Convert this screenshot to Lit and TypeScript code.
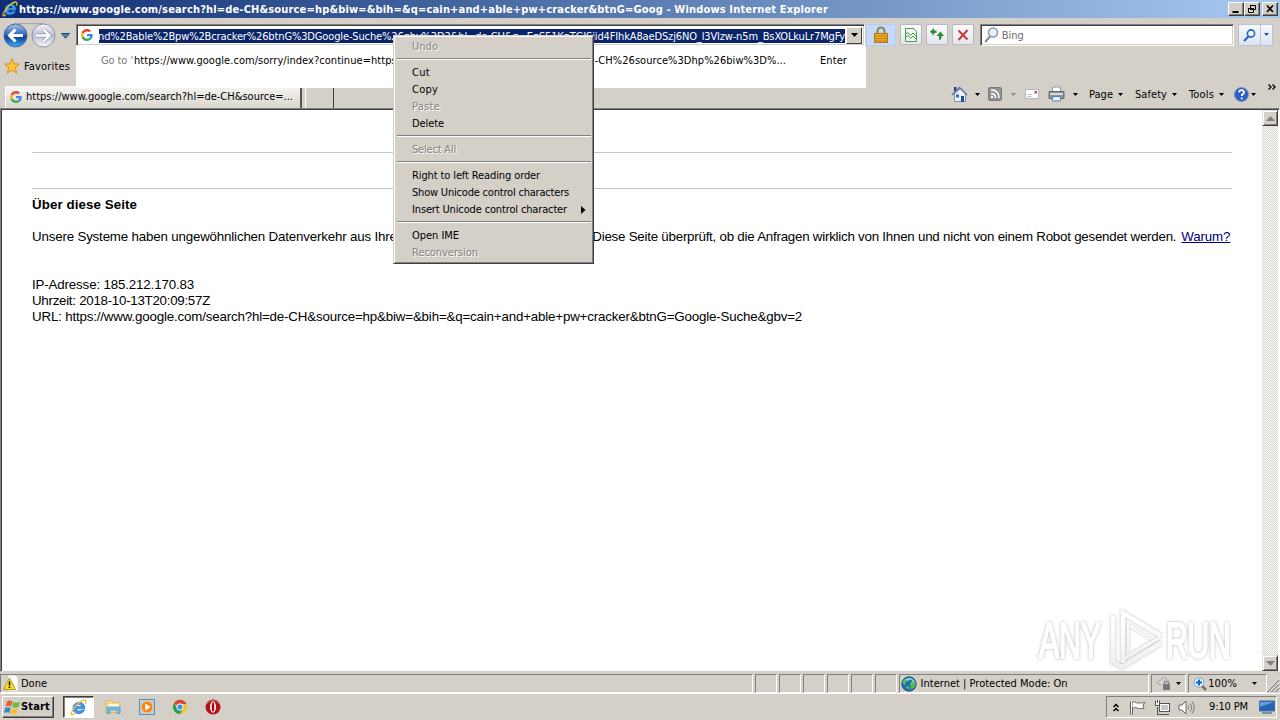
import { LitElement, css, html, svg } from "lit";
import { customElement, property } from "lit/decorators.js";
import { classMap } from "lit/directives/class-map.js";

// inline text whose tracking is tuned to the pixel width of the original UI font
@customElement("fit-text")
export class FitText extends LitElement {
    @property({ type: Number }) w = 0;

    static styles = css`
        :host {
            display: inline-block;
            white-space: pre;
            flex: none;
        }
    `
    firstUpdated() {
        const length = (this.textContent ?? "").trim().length;
        const natural = this.getBoundingClientRect().width;
        if (this.w && length) {
            this.style.letterSpacing = `${(this.w - natural) / length}px`;
        }
    }
    render() {
        return html`<slot></slot>`
    }
}

const googleIcon = html`
    <svg width="12" height="12" viewBox="0 0 48 48">
        <path fill="#ea4335" d="M24 9.500c3.500 0 6.700 1.200 9.200 3.600l6.900-6.900C35.900 2.400 30.500 0 24 0 14.600 0 6.500 5.400 2.600 13.200l8 6.200C12.400 13.700 17.700 9.500 24 9.500z"/>
        <path fill="#4285f4" d="M47 24.500c0-1.600-.2-3.100-.4-4.500H24v9h12.900c-.6 3-2.200 5.500-4.700 7.200l7.700 6C44.400 38 47 31.800 47 24.500z"/>
        <path fill="#fbbc05" d="M10.500 28.600c-.5-1.500-.8-3-.8-4.600s.3-3.100.8-4.600l-8-6.200C.9 16.500 0 20.100 0 24s.9 7.500 2.600 10.800z"/>
        <path fill="#34a853" d="M24 48c6.500 0 11.900-2.100 15.900-5.800l-7.700-6c-2.200 1.500-4.900 2.300-8.200 2.300-6.300 0-11.600-4.200-13.500-9.900l-8 6.200C6.500 42.600 14.600 48 24 48z"/>
    </svg>`

const ieIcon = (size: number) => html`
    <svg width=${size} height=${size} viewBox="0 0 16 16">
        <path fill-rule="evenodd" d="M14 9.200H6.200c.3 2.500 3.400 2.700 4.500 1.100h3C11.500 15.600 2.600 14.800 2.800 8.500 3 1.500 14.300.8 14 9.200zM6.200 7h4.500C10.300 4.400 6.600 4.400 6.200 7z" fill="#3c9cf0" stroke="#1560b0" stroke-width=".5"/>
        <path d="M4.200 13.400c-2.400 2.400-4 1.700-2.600-1.200C3.400 8 9.400 1.600 13.200 1c2-.2 2 1.800 1 3.600" fill="none" stroke="#f0c02c" stroke-width="1.300"/>
    </svg>`

const caret = (cls = "") => html`
    <svg class="caret ${cls}" width="5" height="3" viewBox="0 0 5 3"><path d="M0 0h5L2.500 3z" fill="currentColor"/></svg>`

const scrollArrow = (d: string) => html`
    <svg width="9" height="5" viewBox="0 0 9 5"><path d=${d} fill="#808080"/></svg>`

@customElement("context-menu")
export class ContextMenu extends LitElement {
    items = [
        { label: "Undo", w: 26, off: true },
        null,
        { label: "Cut", w: 18 },
        { label: "Copy", w: 26 },
        { label: "Paste", w: 28, off: true },
        { label: "Delete", w: 32 },
        null,
        { label: "Select All", w: 44, off: true },
        null,
        { label: "Right to left Reading order", w: 128 },
        { label: "Show Unicode control characters", w: 157 },
        { label: "Insert Unicode control character", w: 155, sub: true },
        null,
        { label: "Open IME", w: 47 },
        { label: "Reconversion", w: 66, off: true },
    ]

    static styles = css`
        :host {
            box-sizing: border-box;
            display: block;
            padding: 2px 1px 1px;
            background: #d4d0c8;
            border: 1px solid;
            border-color: #d4d0c8 #404040 #404040 #d4d0c8;
            box-shadow: inset 1px 1px #fff, inset -1px -1px #808080;
        }
        .item {
            height: 17px;
            padding: 0 6px 0 17px;
            display: flex;
            align-items: center;
            justify-content: space-between;
            line-height: 15px;
        }
        .off {
            color: #858279;
            text-shadow: 1px 1px #fff;
        }
        .sep {
            height: 1px;
            margin: 3px 1px 4px 2px;
            background: #808080;
            border-bottom: 1px solid #fff;
        }
    `
    render() {
        return this.items.map(item => item
            ? html`
                <div class=${classMap({ item: true, off: !!item.off })}>
                    <fit-text w=${item.w}>${item.label}</fit-text>
                    ${item.sub ? html`<svg width="5" height="8" viewBox="0 0 5 8"><path d="M0 0v8l4.500-4z"/></svg>` : ""}
                </div>`
            : html`<div class="sep"></div>`)
    }
}

@customElement("browser-toolbar")
export class BrowserToolbar extends LitElement {
    static styles = css`
        :host {
            height: 36px;
            display: flex;
            box-sizing: border-box;
            padding: 5px 7px 0 3px;
            align-items: flex-start;
        }
        svg {
            display: block;
            flex: none;
        }
        .hist {
            margin: 10px 6px 0 4px;
        }
        .field {
            box-sizing: border-box;
            height: 22px;
            margin-top: 1px;
            background: #fff;
            display: flex;
            align-items: center;
            border: 1px solid;
            border-color: #808080 #fff #fff #808080;
            box-shadow: inset 1px 1px #404040, inset -1px -1px #d4d0c8;
        }
        .address {
            width: 789px;
            padding: 0 2px 0 4px;
            gap: 6px;
        }
        .url {
            width: 747px;
            height: 14px;
            margin-top: 1px;
            line-height: 15px;
            overflow: hidden;
            background: #0a246a;
            color: #fff;
        }
        .url fit-text {
            margin-left: -1px;
        }
        .drop {
            box-sizing: border-box;
            width: 16px;
            height: 17px;
            margin-left: -5px;
            background: #d4d0c8;
            border: 1px solid;
            border-color: #fff #404040 #404040 #fff;
            display: flex;
            align-items: center;
            justify-content: center;
        }
        .lock {
            width: 30px;
            height: 22px;
            margin: 1px 4px 0 1px;
            background: #c5dcf8;
            display: flex;
            justify-content: center;
            align-items: center;
            box-shadow: inset 0 0 0 1px #b4cdf3;
        }
        .btn {
            box-sizing: border-box;
            width: 22px;
            height: 21px;
            margin: 1px 4px 0 0;
            border: 1px solid #b3bac6;
            border-radius: 2px;
            background: linear-gradient(#fafbfd, #e2e6ee);
            display: flex;
            justify-content: center;
            align-items: center;
        }
        .search {
            width: 255px;
            margin-left: 2px;
            padding-left: 3px;
            gap: 3px;
            color: #6d6d6d;
        }
        .search fit-text {
            margin-top: 2px;
        }
        .go {
            margin: 1px 0 0 4px;
            box-sizing: border-box;
            height: 22px;
            width: 35px;
            display: flex;
            align-items: center;
            border: 1px solid #b9c4d6;
            background: linear-gradient(#f6f8fc, #dde5f2);
            color: #1a56b8;
        }
        .go > svg:first-child {
            margin: 0 4px;
        }
        .go > span {
            height: 20px;
            border-left: 1px solid #b9c4d6;
            padding: 8px 0 0 3px;
            box-sizing: border-box;
        }
    `
    render() {
        return html`
            <svg width="54" height="26" viewBox="0 0 54 26">
                <defs>
                    <linearGradient id="b" x2="0" y2="1">
                        <stop offset="0" stop-color="#a8c4ec"/><stop offset=".45" stop-color="#3168bf"/>
                        <stop offset=".55" stop-color="#0b3c9c"/><stop offset="1" stop-color="#3fb2f4"/>
                    </linearGradient>
                    <linearGradient id="f" x2="0" y2="1">
                        <stop offset="0" stop-color="#f4f6fb"/><stop offset=".5" stop-color="#b9bfd0"/><stop offset="1" stop-color="#f6f9fd"/>
                    </linearGradient>
                </defs>
                <path d="M12 .5h29" stroke="#aaa8ae" stroke-width="1.500"/>
                <circle cx="12.500" cy="12.500" r="11.500" fill="url(#b)" stroke="#4e6696"/>
                <circle cx="40.500" cy="12.500" r="11.500" fill="url(#f)" stroke="#8c93a6"/>
                <path d="M20 12.500H7M12.500 6.500l-6 6 6 6" fill="none" stroke="#fff" stroke-width="3"/>
                <path d="M33 12.500h13M40.500 6.500l6 6-6 6" fill="none" stroke="#8e95a8" stroke-width="4"/>
                <path d="M33 12.500h13M40.500 6.500l6 6-6 6" fill="none" stroke="#fff" stroke-width="2.500"/>
            </svg>
            <svg class="hist" width="9" height="6" viewBox="0 0 9 6"><path d="M.5.500h8L4.500 5.200z" fill="#4a86ae" stroke="#1d4c72"/></svg>
            <div class="field address">
                ${googleIcon}
                <div class="url"><fit-text w="747">nd%2Bable%2Bpw%2Bcracker%26btnG%3DGoogle-Suche%26gbv%3D2&amp;hl=de-CH&amp;q=EgS51KpTGJSiid4FIhkA8aeDSzj6NO_l3Vlzw-n5m_BsXOLkuLr7MgFy</fit-text></div>
                <div class="drop"><svg width="7" height="4" viewBox="0 0 7 4"><path d="M0 0h7L3.500 4z"/></svg></div>
            </div>
            <div class="lock">
                <svg width="16" height="18" viewBox="0 0 16 18">
                    <path d="M4.500 9V5a3.500 3.500 0 0 1 7 0v4" fill="none" stroke="#8d8050" stroke-width="2"/>
                    <rect x="1.500" y="7.500" width="13" height="9" fill="#eda927" stroke="#b07818"/>
                    <path d="M2 10h12M2 12.500h12M2 15h12" stroke="#c78212"/>
                </svg>
            </div>
            <div class="btn">
                <svg width="12" height="14" viewBox="0 0 12 14">
                    <path d="M.5.500h8l3 3v10H.5z" fill="#f3fbf3" stroke="#4b9c50"/>
                    <path d="M1 6l2-1.500 2.500 3L8 5l3 3M1 9l2-1.500 2.500 3L8 8l3 3" fill="none" stroke="#3f9545"/>
                </svg>
            </div>
            <div class="btn">
                <svg width="14" height="13" viewBox="0 0 14 13">
                    <path d="M4 0v2.500H6.500V5H4v2.500L0 3.800z" fill="#2f8a36"/>
                    <path d="M9 12V8H6.500l4-4.500 3.500 4.500h-2.500c0 3-.8 4-2.500 4z" fill="#2f8a36"/>
                </svg>
            </div>
            <div class="btn">
                <svg width="12" height="12" viewBox="0 0 12 12"><path d="M1.500 1.500l9 9M10.500 1l-9 10" stroke="#cf3a38" stroke-width="2"/></svg>
            </div>
            <div class="field search">
                <svg width="15" height="16" viewBox="0 0 15 16">
                    <circle cx="9" cy="5.500" r="4.500" fill="#e6f1fa" stroke="#8c9aac" stroke-width="1.500"/>
                    <path d="M6 9.500L1.200 15" stroke="#7e8998" stroke-width="2"/>
                </svg>
                <fit-text w="22">Bing</fit-text>
            </div>
            <div class="go">
                <svg width="13" height="13" viewBox="0 0 13 13">
                    <circle cx="8" cy="4.500" r="3.600" fill="#eaf4fd" stroke="#2265c8" stroke-width="1.600"/>
                    <path d="M5.500 7.500L1 12" stroke="#2265c8" stroke-width="2.200"/>
                </svg>
                <span>${caret()}</span>
            </div>
        `
    }
}

@customElement("command-bar")
export class CommandBar extends LitElement {
    static styles = css`
        :host {
            display: flex;
            align-items: center;
            height: 20px;
        }
        svg {
            display: block;
            flex: none;
        }
        .caret {
            margin: 0 0 0 5px;
        }
        .dim {
            color: #8d8a84;
        }
        .home {
            margin-right: 2px;
        }
        .feed {
            margin-left: 8px;
        }
        .feed + .caret {
            margin-left: 9px;
        }
        .mail {
            margin: 0 9px;
        }
        .print + .caret {
            margin: 0 11px 0 8px;
        }
        .menu {
            display: flex;
            align-items: center;
            margin-right: 12px;
        }
        .menu fit-text {
            margin-top: 1px;
        }
        .help {
            margin-left: -2px;
        }
        .help + .caret {
            margin-left: 2px;
        }
        .more {
            align-self: flex-start;
            margin: 0 0 0 12px;
        }
    `
    render() {
        return html`
            <svg class="home" width="17" height="17" viewBox="0 0 17 17">
                <path d="M3.500 7.500v8h11v-8l-5-5z" fill="#eef1f8" stroke="#7b8db5"/>
                <path d="M3 1h2.500v3L3 6z" fill="#24427e"/>
                <path d="M1 9l7.500-7.500L16 9" fill="none" stroke="#5474ad" stroke-width="1.500"/>
                <path d="M10 10h3v6h-3z" fill="#2a4c96"/><path d="M5 8.500h3v3H5z" fill="#3869b5"/>
            </svg>
            ${caret()}
            <svg class="feed" width="14" height="14" viewBox="0 0 14 14">
                <rect x=".5" y=".5" width="13" height="13" rx="1.500" fill="#929292" stroke="#787878"/>
                <path d="M3 3c5 0 8 3 8 8M3 6.500c3 0 4.500 1.500 4.500 4.500" fill="none" stroke="#fff" stroke-width="1.500"/>
                <circle cx="4" cy="10" r="1.200" fill="#fff"/>
            </svg>
            ${caret("dim")}
            <svg class="mail" width="14" height="10" viewBox="0 0 14 10">
                <rect x=".5" y=".5" width="13" height="9" fill="#fdfdfe" stroke="#b7b6ba"/>
                <path d="M2.500 5.500h5M2.500 7.500h4" stroke="#bcbcc2"/><path d="M9.500 2h2.500v2.500H9.500z" fill="#cc4d57"/>
            </svg>
            <svg class="print" width="17" height="16" viewBox="0 0 17 16">
                <path d="M4.500 6V1h8v5" fill="#fff" stroke="#8c96aa"/>
                <path d="M1 5.500h15v7H1z" fill="#8e929a" stroke="#656a73"/>
                <path d="M2 8h13" stroke="#d6d8dd" stroke-width="2"/>
                <path d="M4.500 10.500h8V15h-8z" fill="#e5eefa" stroke="#5b82b5"/>
            </svg>
            ${caret()}
            <div class="menu"><fit-text w="24">Page</fit-text>${caret()}</div>
            <div class="menu"><fit-text w="32">Safety</fit-text>${caret()}</div>
            <div class="menu"><fit-text w="25">Tools</fit-text>${caret()}</div>
            <svg class="help" width="15" height="15" viewBox="0 0 15 15">
                <circle cx="7.500" cy="7.500" r="7" fill="#2f5fc4" stroke="#7d91bb"/>
                <path d="M5 5.500c.3-3.300 5.300-2.900 5 0-.1 1.500-2.300 1.600-2.300 3.500M7.700 10.500v1.800" fill="none" stroke="#fff" stroke-width="1.800"/>
            </svg>
            ${caret()}
            <svg class="more" width="8" height="6" viewBox="0 0 8 6"><path d="M.5.500L3 3 .5 5.500M4.500.500L7 3 4.500 5.500" fill="none" stroke="#000" stroke-width="1.400"/></svg>
        `
    }
}

@customElement("web-page")
export class WebPage extends LitElement {
    static styles = css`
        :host {
            flex: 1;
            display: flex;
            background: #fff;
            border: 1px solid;
            border-color: #808080 #fff #d4d0c8 #808080;
            box-shadow: inset 1px 1px #404040;
            padding: 1px 1px 0 1px;
            position: relative;
        }
        main {
            flex: 1;
            padding: 42px 30px 0;
            font: 13.330px/16px "Liberation Sans", Arial, sans-serif;
            min-width: 0;
        }
        hr {
            border: 0;
            height: 1px;
            margin: 0 0 35px;
            background: #c6c6c6;
        }
        hr + hr {
            margin-bottom: 8px;
        }
        p {
            margin: 0 0 16px;
            white-space: nowrap;
        }
        .title {
            font-weight: bold;
        }
        .reason {
            display: flex;
            margin-bottom: 32px;
        }
        a {
            margin-left: 5px;
            color: #000080;
        }
        a fit-text {
            text-decoration: underline;
        }
        .scroll {
            width: 16px;
            display: flex;
            flex-direction: column;
            justify-content: space-between;
            background: repeating-conic-gradient(#fff 0 25%, #d4d0c8 0 50%) 0 0 / 2px 2px;
        }
        .scroll div {
            box-sizing: border-box;
            height: 16px;
            background: #d4d0c8;
            border: 1px solid;
            border-color: #e6e3dd #404040 #404040 #e6e3dd;
            box-shadow: inset 1px 1px #fff, inset -1px -1px #808080;
            display: flex;
            align-items: center;
            justify-content: center;
        }
        .mark {
            position: absolute;
            right: 44px;
            bottom: 0;
            filter: drop-shadow(0 0 1.500px rgba(0, 0, 0, 0.28));
        }
        .mark text {
            font: 50px "Liberation Sans", Arial, sans-serif;
            stroke: url(#m);
            stroke-width: 2;
        }
    `
    render() {
        return html`
            <main>
                <hr>
                <hr>
                <p class="title"><fit-text w="105">Über diese Seite</fit-text></p>
                <p class="reason">
                    <fit-text w="560.500">Unsere Systeme haben ungewöhnlichen Datenverkehr aus Ihrem Computernetzwerk festgestellt. </fit-text>
                    <fit-text w="584">Diese Seite überprüft, ob die Anfragen wirklich von Ihnen und nicht von einem Robot gesendet werden.</fit-text>
                    <a href="#"><fit-text w="49">Warum?</fit-text></a>
                </p>
                <fit-text w="162">IP-Adresse: 185.212.170.83</fit-text><br>
                <fit-text w="178">Uhrzeit: 2018-10-13T20:09:57Z</fit-text><br>
                <fit-text w="770">URL: https://www.google.com/search?hl=de-CH&amp;source=hp&amp;biw=&amp;bih=&amp;q=cain+and+able+pw+cracker&amp;btnG=Google-Suche&amp;gbv=2</fit-text>
            </main>
            <div class="scroll">
                <div>${scrollArrow("M4.500 0L9 5H0z")}</div>
                <div>${scrollArrow("M0 0h9L4.500 5z")}</div>
            </div>
            <svg class="mark" width="200" height="64" viewBox="0 0 200 64">
                <defs>
                    <linearGradient id="m" gradientUnits="userSpaceOnUse" x1="0" y1="-60" x2="0" y2="64">
                        <stop offset=".6" stop-color="#fff"/><stop offset="1" stop-color="#eee"/>
                    </linearGradient>
                </defs>
                <g fill="url(#m)">
                    <text transform="translate(4 51) scale(.61 1)" textLength="102">ANY</text>
                    <text transform="translate(131 51) scale(.61 1)" textLength="106">RUN</text>
                </g>
                <g fill="none" stroke="url(#m)" stroke-width="4.500">
                    <path d="M78 9v46l9 5 39-24"/>
                    <path d="M88 56V6l38 23"/>
                    <path d="M88 52l36-21" stroke-width="3"/>
                    <path d="M93 44V18l23 14" stroke-width="2"/>
                </g>
            </svg>
        `
    }
}

@customElement("status-bar")
export class StatusBar extends LitElement {
    static styles = css`
        :host {
            height: 22px;
            box-sizing: border-box;
            padding: 2px 0 1px;
            display: flex;
            gap: 2px;
            border-bottom: 1px solid #fff;
        }
        .cell {
            box-sizing: border-box;
            width: 22px;
            height: 19px;
            display: flex;
            align-items: center;
            border: 1px solid;
            border-color: #808080 #fff #fff #808080;
        }
        .done {
            width: 754px;
            padding-left: 2px;
            gap: 2px;
        }
        .zone {
            width: 251px;
            padding-left: 1px;
            gap: 4px;
        }
        .filter {
            width: 35px;
            padding-left: 4px;
            gap: 4px;
        }
        .zoom {
            width: 79px;
            padding-left: 4px;
            gap: 1px;
        }
        .zoom .caret {
            margin-left: 14px;
        }
        .grip {
            align-self: flex-end;
            margin-left: -2px;
        }
    `
    render() {
        return html`
            <div class="cell done">
                <svg width="16" height="17" viewBox="0 0 16 17">
                    <path d="M5 0h7l3 3v13H5z" fill="#fff" stroke="#d5d5d5"/>
                    <path d="M6.500 3l6 11.500H.6z" fill="#ffdf22" stroke="#b99a13"/>
                    <path d="M6.500 6.500v4M6.500 11.500v1.500" stroke="#000" stroke-width="1.500"/>
                </svg>
                <fit-text w="26">Done</fit-text>
            </div>
            ${[1, 2, 3, 4, 5, 6].map(() => html`<div class="cell"></div>`)}
            <div class="cell zone">
                <svg width="16" height="16" viewBox="0 0 16 16">
                    <circle cx="8" cy="8" r="7.200" fill="#2367c4" stroke="#2c4f7a"/>
                    <path d="M2 5c2-3 5-3 7-3L8 5 5 6 4 9 2 8zM9 7l4-3 2 4-2 4-3 1zM4 11l4-1 1 4z" fill="#4fc052"/>
                    <path d="M5 4c3-2 6-2 8 2" fill="none" stroke="#93dcf5" stroke-width="1.500"/>
                </svg>
                <fit-text w="147">Internet | Protected Mode: On</fit-text>
            </div>
            <div class="cell filter">
                <svg width="16" height="15" viewBox="0 0 16 15">
                    <path d="M1 7c2-4 4-1 5-4 2-4 6 0 4 3M1 7l4 2" fill="#d9d9d9" stroke="#a2a2a2"/>
                    <rect x="7" y="8" width="7" height="6" fill="#777"/><path d="M8.500 8V5.500h4V8" fill="none" stroke="#8c8c8c" stroke-width="1.500"/>
                </svg>
                ${caret()}
            </div>
            <div class="cell zoom">
                <svg width="14" height="14" viewBox="0 0 14 14">
                    <path d="M9 9l4 4" stroke="#846e4c" stroke-width="2.500"/>
                    <circle cx="6" cy="5.500" r="4.800" fill="#e2f2ff" stroke="#7aa4cf"/>
                    <path d="M6 2.500v6M3 5.500h6" stroke="#1763c5" stroke-width="2"/>
                </svg>
                <fit-text w="29">100%</fit-text>
                ${caret()}
            </div>
            <svg class="grip" width="13" height="13" viewBox="0 0 13 13">
                <path d="M0 13L12 1M4 13l8-8M8 13l4-4" stroke="#808080" stroke-width="1.500"/>
                <path d="M-1 13L12 0M3 13l9-9M7 13l5-5" stroke="#fff" stroke-width=".7"/>
            </svg>
        `
    }
}

@customElement("task-bar")
export class TaskBar extends LitElement {
    static styles = css`
        :host {
            height: 26px;
            box-sizing: border-box;
            padding: 1px 3px 2px 2px;
            display: flex;
            justify-content: space-between;
            border-top: 1px solid #d4d0c8;
        }
        svg {
            display: block;
        }
        .left, .start, .tray {
            display: flex;
            align-items: center;
        }
        .left {
            gap: 17px;
        }
        .start {
            box-sizing: border-box;
            width: 52px;
            height: 22px;
            padding-left: 1px;
            font-weight: bold;
            border: 1px solid;
            border-color: #fff #404040 #404040 #fff;
            box-shadow: inset -1px -1px #808080;
        }
        .active {
            box-sizing: border-box;
            width: 31px;
            height: 22px;
            margin: 0 -6px 0 -8px;
            display: flex;
            align-items: center;
            justify-content: center;
            background: #fff;
            border: 1px solid;
            border-color: #404040 #fff #fff #404040;
            box-shadow: inset 1px 1px #808080;
        }
        .tray {
            box-sizing: border-box;
            width: 171px;
            height: 22px;
            padding: 0 1px 0 6px;
            border: 1px solid;
            border-color: #808080 #fff #fff #808080;
        }
        .tray .icons {
            display: flex;
            align-items: center;
            gap: 8px;
            margin: 0 14px 0 10px;
        }
        .tray > svg:last-child {
            margin-left: 11px;
        }
    `
    render() {
        return html`
            <div class="left">
                <div class="start">
                    <svg width="17" height="16" viewBox="0 0 17 16">
                        <path d="M3 2.500C5 1 6.500 1.500 8.500 2.500L7 7.500C5 6.500 3.500 6.500 1.500 7.500z" fill="#e5602a"/>
                        <path d="M9.500 3c2 1 4 1 6.500-.5L14.500 8C12 9 10 9 8 8z" fill="#6fb844"/>
                        <path d="M1.200 9c2-1.200 3.500-1 5.500 0L5.300 14C3.500 13 2 13-.2 14z" fill="#3c87d3"/>
                        <path d="M7.800 9.500c2 1 4 1 6.200 0L12.500 14.500c-2.200 1-4 1-6.200 0z" fill="#f5c02c"/>
                    </svg>
                    <fit-text w="29">Start</fit-text>
                </div>
                <div class="active">${ieIcon(17)}</div>
                <svg width="17" height="16" viewBox="0 0 17 16">
                    <path d="M1 1.500h6l1 2h7v10H1z" fill="#f0d98a" stroke="#d9bd64"/>
                    <path d="M3 5h11v4H3z" fill="#fff7d8"/>
                    <path d="M2 8h13v6.500h-3V11H5v3.500H2z" fill="#71bde4" stroke="#4a9bc7" stroke-width=".7"/>
                </svg>
                <svg width="16" height="16" viewBox="0 0 16 16">
                    <rect x=".5" y=".5" width="15" height="15" fill="#b7d2ec" stroke="#5b8fc3"/>
                    <circle cx="8" cy="8" r="6" fill="#f28a1c" stroke="#f9c687"/><path d="M6.300 4.600v6.800L11.500 8z" fill="#fff"/>
                </svg>
                <svg width="16" height="16" viewBox="0 0 16 16">
                    <circle cx="8" cy="8" r="7" fill="#f4c620"/>
                    <path d="M8 8L1.900 4.500A7 7 0 0 1 14.500 5H8z" fill="#dc4639"/>
                    <path d="M1.900 4.500A7 7 0 0 0 8 15l3-5.500H6z" fill="#25a05a"/>
                    <circle cx="8" cy="8" r="3.200" fill="#4a8af0" stroke="#fff"/>
                </svg>
                <svg width="16" height="16" viewBox="0 0 16 16">
                    <circle cx="8" cy="8" r="7.500" fill="#b80f16"/>
                    <path d="M2 5c3-5 9-5 12 0" fill="none" stroke="#e26a6b"/>
                    <ellipse cx="8" cy="8" rx="3" ry="5.800" fill="#fff"/><ellipse cx="8" cy="8" rx="1.300" ry="4.800" fill="#a00b12"/>
                </svg>
            </div>
            <div class="tray">
                <svg width="6" height="9" viewBox="0 0 6 9"><path d="M.5 4L3 1.500 5.500 4M.5 8L3 5.500 5.500 8" fill="none" stroke="#000" stroke-width="1.500"/></svg>
                <div class="icons">
                    <svg width="17" height="15" viewBox="0 0 17 15">
                        <path d="M2.500 1.500v13" stroke="#5e5e5e" stroke-width="3"/><path d="M3 2c4-1 5 2 7 1 2 0 3 0 6-.5L14 5l1 3.500c-3 0-5 .5-7-.5-1.500-1-3 0-5 0z" fill="#fff" stroke="#6b6b6b"/>
                        <path d="M2.500 1v13" stroke="#fff"/>
                    </svg>
                    <svg width="16" height="15" viewBox="0 0 16 15">
                        <rect x="5.500" y="3.500" width="10" height="8" fill="#c7c7c7" stroke="#555"/><path d="M6.500 4.500h8v6h-8z" fill="none" stroke="#fff"/>
                        <path d="M6 14.500h9M3.500 7v7.500H6" fill="none" stroke="#555"/><path d="M1.500.500v5h4v-5M3.500 0v3" fill="#fff" stroke="#4d4d4d"/>
                    </svg>
                    <svg width="17" height="15" viewBox="0 0 17 15">
                        <path d="M1 5h3l4-4v13l-4-4H1z" fill="#fff" stroke="#666"/>
                        <path d="M10 5.500q2 2 0 4M12 3.500q3.500 4 0 8M14 1.500q4.500 6 0 12" fill="none" stroke="#777"/>
                    </svg>
                </div>
                <fit-text w="39">9:10 PM</fit-text>
                <svg width="16" height="14" viewBox="0 0 16 14">
                    <path d="M.5 1h15v10H.5z" fill="#2463b5" stroke="#4d6f9c"/><path d="M1 2h14L1 7z" fill="#5f9ce0"/><path d="M3 13h10" stroke="#37516f"/>
                </svg>
            </div>
        `
    }
}

@customElement("app-root")
export class AppRoot extends LitElement {
    static styles = css`
        :host {
            position: relative;
            width: 1280px;
            height: 720px;
            overflow: hidden;
            display: flex;
            flex-direction: column;
            background: #d4d0c8;
            color: #000;
            font: 11px/14px "DejaVu Sans Condensed", "DejaVu Sans", sans-serif;
            font-stretch: condensed;
        }
        svg {
            display: block;
        }
        header {
            height: 18px;
            box-sizing: border-box;
            padding: 0 2px;
            display: flex;
            align-items: center;
            gap: 1px;
            background: linear-gradient(90deg, #0f2d72, #a6caf0);
            color: #fff;
            font-weight: bold;
        }
        header fit-text {
            margin-top: 1px;
        }
        .controls {
            margin-left: auto;
            display: flex;
        }
        .controls span {
            box-sizing: border-box;
            width: 16px;
            height: 14px;
            background: #d4d0c8;
            border: 1px solid;
            border-color: #fff #404040 #404040 #fff;
            box-shadow: inset -1px -1px #808080;
        }
        .controls span:last-child {
            margin-left: 2px;
        }
        .bars {
            height: 54px;
            display: flex;
            justify-content: space-between;
        }
        .fav {
            height: 32px;
            display: flex;
            align-items: center;
            gap: 4px;
            padding: 0 0 0 4px;
            margin-bottom: -3px;
            box-sizing: border-box;
        }
        .fav fit-text {
            margin-top: -7px;
        }
        .fav svg {
            margin-top: -8px;
        }
        .tabs {
            display: flex;
            gap: 3px;
            padding: 3px 0 0 5px;
        }
        .tab {
            box-sizing: border-box;
            width: 297px;
            height: 22px;
            padding: 0 0 0 4px;
            display: flex;
            align-items: center;
            gap: 4px;
            background: linear-gradient(#f7f6f4, #d8d5ce);
            border-left: 1px solid #fff;
            border-right: 2px solid #58564f;
        }
        .new {
            width: 27px;
            border-left: 1px solid #fff;
            border-right: 1px solid #404040;
        }
        command-bar {
            margin: 30px 4px 0 0;
        }
        .suggest {
            position: absolute;
            left: 76px;
            top: 46px;
            width: 790px;
            height: 42px;
            box-sizing: border-box;
            padding: 8px 19px 0 25px;
            background: #fff;
            display: flex;
        }
        .goto {
            color: #777;
            margin-right: 1px;
        }
        .key {
            margin-left: auto;
        }
        context-menu {
            position: absolute;
            left: 393px;
            top: 35px;
            width: 201px;
            height: 229px;
        }
    `
    render() {
        return html`
            <header>
                ${ieIcon(16)}
                <fit-text w="809">https://www.google.com/search?hl=de-CH&amp;source=hp&amp;biw=&amp;bih=&amp;q=cain+and+able+pw+cracker&amp;btnG=Goog - Windows Internet Explorer</fit-text>
                <div class="controls">
                    ${[
                        svg`<path d="M3.500 9h6" stroke-width="2"/>`,
                        svg`<path d="M5.500 2.500h5v4h-5zM5 2.500h6M3.500 5.500h5v4h-5zM3 5.500h6" fill="#d4d0c8"/>`,
                        svg`<path d="M4 2.500l6 6.500M10 2.500L4 9" stroke-width="1.700"/>`,
                    ].map(icon => html`<span><svg width="14" height="12" stroke="#000" fill="none">${icon}</svg></span>`)}
                </div>
            </header>
            <browser-toolbar></browser-toolbar>
            <div class="bars">
                <div>
                    <div class="fav">
                        <svg width="16" height="16" viewBox="0 0 16 16"><path d="M8 .8l2.100 5 5.200.4-4 3.400 1.300 5.400L8 12.100 3.400 15l1.300-5.400-4-3.400 5.200-.4z" fill="#fbc53a" stroke="#dc8d18"/></svg>
                        <fit-text w="46">Favorites</fit-text>
                    </div>
                    <div class="tabs">
                        <div class="tab">${googleIcon}<fit-text w="267">https://www.google.com/search?hl=de-CH&amp;source=...</fit-text></div>
                        <div class="new"></div>
                    </div>
                </div>
                <command-bar></command-bar>
            </div>
            <web-page></web-page>
            <status-bar></status-bar>
            <task-bar></task-bar>
            <div class="suggest">
                <fit-text class="goto" w="32">Go to '</fit-text>
                <fit-text w="652">https://www.google.com/sorry/index?continue=https://www.google.com/search%3Fhl%3Dde-CH%26source%3Dhp%26biw%3D%...</fit-text>
                <fit-text class="key" w="27">Enter</fit-text>
            </div>
            <context-menu></context-menu>
        `
    }
}
